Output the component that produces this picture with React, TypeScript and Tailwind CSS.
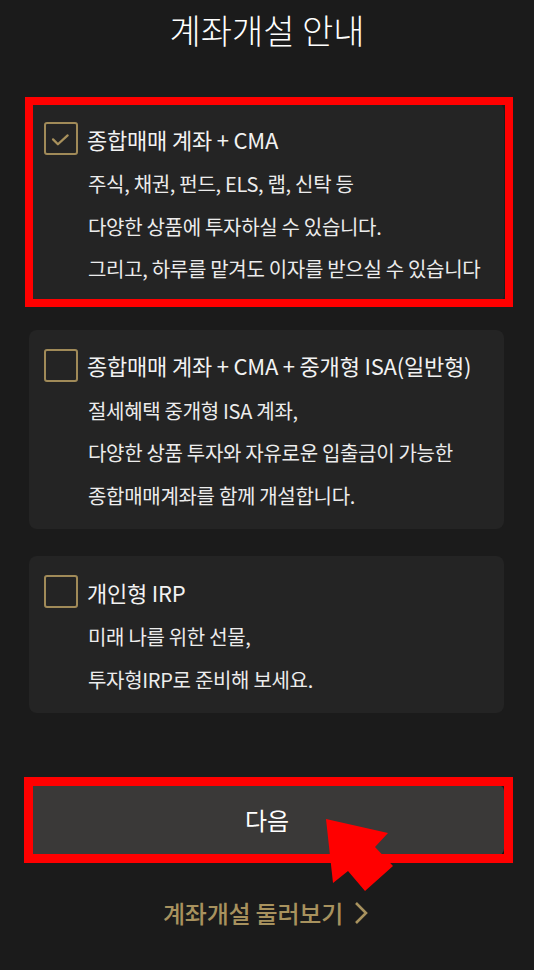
const OPTIONS = [
  {
    title: "종합매매 계좌 + CMA",
    lines: ["주식, 채권, 펀드, ELS, 랩, 신탁 등", "다양한 상품에 투자하실 수 있습니다.", "그리고, 하루를 맡겨도 이자를 받으실 수 있습니다"],
    checked: true,
  },
  {
    title: "종합매매 계좌 + CMA + 중개형 ISA(일반형)",
    lines: ["절세혜택 중개형 ISA 계좌,", "다양한 상품 투자와 자유로운 입출금이 가능한", "종합매매계좌를 함께 개설합니다."],
    checked: false,
  },
  {
    title: "개인형 IRP",
    lines: ["미래 나를 위한 선물,", "투자형IRP로 준비해 보세요."],
    checked: false,
  },
];

function CheckBox({ checked }: { checked: boolean }) {
  return (
    <div className="flex h-[33px] w-[34px] shrink-0 items-center justify-center rounded-[3px] border-2 border-[#a08a58]">
      {checked && (
        <svg width="34" height="33" viewBox="0 0 34 33" fill="none">
          <path d="M8 17.5 L13.5 23 L24.5 13" stroke="#a8915c" strokeWidth="2.6" strokeLinecap="round" strokeLinejoin="round" />
        </svg>
      )}
    </div>
  );
}

export default function App() {
  return (
    <div
      className="relative min-h-[970px] w-[534px] bg-[#1b1b1b] text-white"
      style={{ fontFamily: '"Noto Sans CJK KR", "Noto Sans", sans-serif' }}
    >
      <h1 className="flex h-[60px] items-center justify-center text-[34px] font-light leading-none text-white">
        계좌개설 안내
      </h1>

      <div className="mt-[43px] flex flex-col gap-[27px] pl-[29px]">
        {OPTIONS.map((opt) => (
          <div key={opt.title} className="w-[475px] rounded-[8px] bg-[#242424] pb-[12px] pl-[15px] pr-[8px] pt-[19px]">
            <div className="flex h-[33px] items-center gap-[9px]">
              <CheckBox checked={opt.checked} />
              <span className="whitespace-nowrap text-[22px] leading-none tracking-[-0.2px] text-[#f2f2f2]">{opt.title}</span>
            </div>
            <div className="mt-[8px] pl-[44px]">
              {opt.lines.map((line) => (
                <p key={line} className="whitespace-nowrap text-[20px] leading-[42.5px] tracking-[-0.3px] text-[#ececec]">
                  {line}
                </p>
              ))}
            </div>
          </div>
        ))}
      </div>

      <div className="mt-[72px] pl-[30px]">
        <button className="flex h-[70px] w-[474px] items-center justify-center rounded-[6px] bg-[#3a3938] text-[24px] text-white shadow-[0_2px_0_#151515]">
          다음
        </button>
      </div>

      <div className="mt-[43px] flex items-center justify-center gap-[10px] pr-[2px] text-[24px] font-medium leading-[30px] tracking-[-0.2px] text-[#a8925e]">
        <span>계좌개설 둘러보기</span>
        <svg width="16" height="26" viewBox="0 0 16 26" fill="none">
          <path d="M3 3 L13 13 L3 23" stroke="#a8925e" strokeWidth="2.6" strokeLinejoin="miter" />
        </svg>
      </div>

      {/* annotation overlays */}
      <div className="pointer-events-none absolute left-[25px] top-[97px] h-[210px] w-[488px] border-[8px] border-[#ff0000]" />
      <div className="pointer-events-none absolute left-[24px] top-[777px] h-[86px] w-[489px] border-[9px] border-[#ff0000]" />
      <svg className="pointer-events-none absolute left-0 top-0" width="534" height="970" viewBox="0 0 534 970">
        <polygon
          points="326,819 388,833 375,847 393,866 365,891 348,871 333,883"
          fill="#ff0000"
        />
      </svg>
    </div>
  );
}
